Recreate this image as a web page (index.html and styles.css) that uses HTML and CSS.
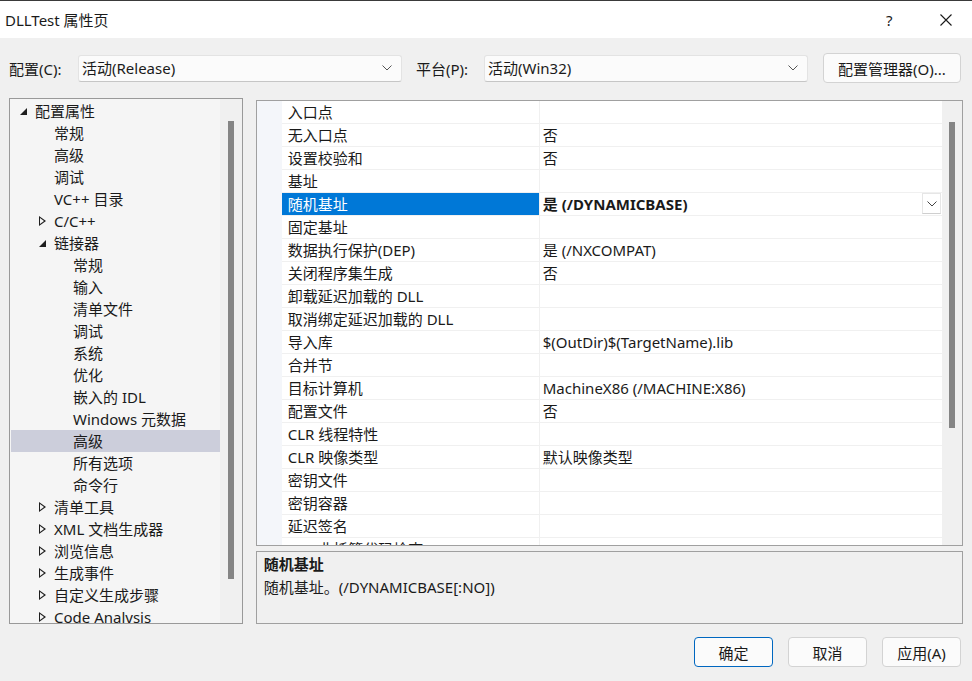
FILE: index.html
```html
<!DOCTYPE html>
<html lang="zh-CN">
<head>
    <meta charset="UTF-8">
    <title>DLLTest 属性页</title>
    <link rel="stylesheet" href="styles.css">
</head>
<body>
    <div class="dialog">
        <header class="titlebar">
            <span class="title">DLLTest 属性页</span>
            <span class="help">?</span>
            <span class="close">
                <svg width="12" height="12" viewBox="0 0 12 12"><path d="M0.5 0.5 L11.5 11.5 M11.5 0.5 L0.5 11.5" stroke="#1a1a1a" stroke-width="1.1" fill="none"/></svg>
            </span>
        </header>

        <div class="config">
            <label class="config-label">配置(C):</label>
            <div class="combo">
                <span>活动(Release)</span>
                <svg class="chevron" width="10" height="6" viewBox="0 0 10 6"><path d="M0.5 0.5 L5 5 L9.5 0.5" stroke="#555" fill="none"/></svg>
            </div>
            <label class="config-label second">平台(P):</label>
            <div class="combo">
                <span>活动(Win32)</span>
                <svg class="chevron" width="10" height="6" viewBox="0 0 10 6"><path d="M0.5 0.5 L5 5 L9.5 0.5" stroke="#555" fill="none"/></svg>
            </div>
            <button class="btn manager">配置管理器(O)...</button>
        </div>

        <div class="main">
            <div class="tree">
                <ul class="tree-list">
                    <li class="lv0"><span class="toggle open"></span>配置属性</li>
                    <li class="lv1"><span class="toggle"></span>常规</li>
                    <li class="lv1"><span class="toggle"></span>高级</li>
                    <li class="lv1"><span class="toggle"></span>调试</li>
                    <li class="lv1"><span class="toggle"></span>VC++ 目录</li>
                    <li class="lv1"><span class="toggle closed"></span>C/C++</li>
                    <li class="lv1"><span class="toggle open"></span>链接器</li>
                    <li class="lv2"><span class="toggle"></span>常规</li>
                    <li class="lv2"><span class="toggle"></span>输入</li>
                    <li class="lv2"><span class="toggle"></span>清单文件</li>
                    <li class="lv2"><span class="toggle"></span>调试</li>
                    <li class="lv2"><span class="toggle"></span>系统</li>
                    <li class="lv2"><span class="toggle"></span>优化</li>
                    <li class="lv2"><span class="toggle"></span>嵌入的 IDL</li>
                    <li class="lv2"><span class="toggle"></span>Windows 元数据</li>
                    <li class="lv2 selected"><span class="toggle"></span>高级</li>
                    <li class="lv2"><span class="toggle"></span>所有选项</li>
                    <li class="lv2"><span class="toggle"></span>命令行</li>
                    <li class="lv1"><span class="toggle closed"></span>清单工具</li>
                    <li class="lv1"><span class="toggle closed"></span>XML 文档生成器</li>
                    <li class="lv1"><span class="toggle closed"></span>浏览信息</li>
                    <li class="lv1"><span class="toggle closed"></span>生成事件</li>
                    <li class="lv1"><span class="toggle closed"></span>自定义生成步骤</li>
                    <li class="lv1"><span class="toggle closed"></span>Code Analysis</li>
                </ul>
                <div class="scrollbar tree-scroll"><div class="thumb"></div></div>
            </div>

            <div class="right">
                <div class="grid">
                    <div class="grid-body">
                        <div class="row"><div class="name">入口点</div><div class="value"></div></div>
                        <div class="row"><div class="name">无入口点</div><div class="value">否</div></div>
                        <div class="row"><div class="name">设置校验和</div><div class="value">否</div></div>
                        <div class="row"><div class="name">基址</div><div class="value"></div></div>
                        <div class="row selected">
                            <div class="name">随机基址</div>
                            <div class="value">是 (/DYNAMICBASE)
                                <span class="drop">
                                    <svg width="10" height="6" viewBox="0 0 10 6"><path d="M0.5 0.5 L5 5 L9.5 0.5" stroke="#444" fill="none"/></svg>
                                </span>
                            </div>
                        </div>
                        <div class="row"><div class="name">固定基址</div><div class="value"></div></div>
                        <div class="row"><div class="name">数据执行保护(DEP)</div><div class="value">是 (/NXCOMPAT)</div></div>
                        <div class="row"><div class="name">关闭程序集生成</div><div class="value">否</div></div>
                        <div class="row"><div class="name">卸载延迟加载的 DLL</div><div class="value"></div></div>
                        <div class="row"><div class="name">取消绑定延迟加载的 DLL</div><div class="value"></div></div>
                        <div class="row"><div class="name">导入库</div><div class="value">$(OutDir)$(TargetName).lib</div></div>
                        <div class="row"><div class="name">合并节</div><div class="value"></div></div>
                        <div class="row"><div class="name">目标计算机</div><div class="value">MachineX86 (/MACHINE:X86)</div></div>
                        <div class="row"><div class="name">配置文件</div><div class="value">否</div></div>
                        <div class="row"><div class="name">CLR 线程特性</div><div class="value"></div></div>
                        <div class="row"><div class="name">CLR 映像类型</div><div class="value">默认映像类型</div></div>
                        <div class="row"><div class="name">密钥文件</div><div class="value"></div></div>
                        <div class="row"><div class="name">密钥容器</div><div class="value"></div></div>
                        <div class="row"><div class="name">延迟签名</div><div class="value"></div></div>
                        <div class="row"><div class="name">CLR 非托管代码检查</div><div class="value"></div></div>
                    </div>
                    <div class="scrollbar grid-scroll"><div class="thumb"></div></div>
                </div>
                <div class="desc">
                    <div class="desc-title">随机基址</div>
                    <div class="desc-text">随机基址。(/DYNAMICBASE[:NO])</div>
                </div>
            </div>
        </div>

        <footer class="buttons">
            <button class="btn default">确定</button>
            <button class="btn">取消</button>
            <button class="btn">应用(A)</button>
        </footer>
    </div>
</body>
</html>
```

FILE: styles.css
```css
html, body {
    margin: 0;
    padding: 0;
    background-color: #f0f0f0;
    font-family: "Noto Sans", "Noto Sans CJK SC", sans-serif;
    font-size: 15px;
    color: #1a1a1a;
}

.dialog {
    width: 972px;
    height: 681px;
    overflow: hidden;
}

/* barra de titulo */
.titlebar {
    height: 37px;
    border-top: 1px solid #3a3a3a;
    background-color: #fff;
    display: flex;
    align-items: center;
    padding-left: 5px;
}

.title {
    flex: 1;
    font-size: 15px;
}

.help {
    width: 20px;
    font-size: 15px;
    margin-right: 34px;
}

.close {
    width: 32px;
    display: flex;
    align-items: center;
}

/* linha de configuracao */
.config {
    height: 60px;
    display: flex;
    align-items: center;
    padding-left: 9px;
}

.config-label {
    width: 69px;
}

.config-label.second {
    width: 68px;
    margin-left: 14px;
}

.combo {
    width: 324px;
    height: 27px;
    box-sizing: border-box;
    background-color: #fbfbfb;
    border: 1px solid #e3e3e3;
    border-bottom-color: #c6c6c6;
    border-radius: 3px;
    display: flex;
    align-items: center;
    justify-content: space-between;
    padding: 0 9px 1px 3px;
}

.btn {
    font-family: inherit;
    font-size: 15px;
    color: #1a1a1a;
    background-color: #fbfbfb;
    border: 1px solid #d3d3d3;
    border-radius: 4px;
    height: 30px;
    width: 79px;
    padding: 0;
}

.btn.manager {
    width: 138px;
    margin-left: 15px;
}

.btn.default {
    border-color: #0067c0;
}

/* area principal */
.main {
    display: flex;
    padding: 0 9px;
    gap: 13px;
}

.tree {
    width: 234px;
    height: 526px;
    box-sizing: border-box;
    border: 1px solid #999;
    background-color: #f5f5f5;
    display: flex;
    overflow: hidden;
}

.tree-list {
    list-style: none;
    margin: 0;
    padding: 1px 0 0 1px;
    width: 209px;
}

.tree-list li {
    height: 22px;
    line-height: 22px;
    display: flex;
    align-items: center;
    white-space: nowrap;
}

.tree-list li.selected {
    background-color: #cccedb;
}

.lv0 { padding-left: 9px; }
.lv1 { padding-left: 28px; }
.lv2 { padding-left: 47px; }

.toggle {
    width: 15px;
    height: 22px;
    flex-shrink: 0;
    position: relative;
}

.toggle.open::before {
    content: "";
    position: absolute;
    left: 0;
    top: 8px;
    border-left: 7px solid transparent;
    border-bottom: 7px solid #1e1e1e;
}

.toggle.closed::before {
    content: "";
    position: absolute;
    left: 0;
    top: 6px;
    border-top: 5px solid transparent;
    border-bottom: 5px solid transparent;
    border-left: 7px solid #1e1e1e;
}

.toggle.closed::after {
    content: "";
    position: absolute;
    left: 1px;
    top: 8px;
    border-top: 3px solid transparent;
    border-bottom: 3px solid transparent;
    border-left: 4px solid #f5f5f5;
}

.scrollbar {
    background-color: #f0f0f0;
    flex-shrink: 0;
    display: flex;
    justify-content: center;
}

.thumb {
    width: 6px;
    background-color: #858585;
}

.tree-scroll {
    width: 22px;
}

.tree-scroll .thumb {
    margin-top: 22px;
    height: 458px;
}

.right {
    width: 708px;
    margin-top: 2px;
    display: flex;
    flex-direction: column;
    gap: 5px;
}

.grid {
    height: 446px;
    box-sizing: border-box;
    border: 1px solid #a0a0a0;
    display: flex;
    overflow: hidden;
}

.grid-body {
    flex: 1;
    background-color: #fff;
    border-left: 25px solid #f4f6fa;
    overflow: hidden;
}

.row {
    height: 23px;
    box-sizing: border-box;
    border-bottom: 1px solid #f0f0f0;
    display: flex;
    line-height: 22px;
    white-space: nowrap;
}

.name {
    width: 258px;
    padding-left: 6px;
    box-sizing: border-box;
    border-right: 1px solid #f0f0f0;
}

.value {
    flex: 1;
    padding-left: 3px;
    position: relative;
}

.row.selected .name {
    background-color: #0078d7;
    color: #fff;
}

.row.selected .value {
    font-weight: bold;
}

.drop {
    position: absolute;
    right: 1px;
    top: 0;
    width: 19px;
    height: 21px;
    box-sizing: border-box;
    background-color: #fff;
    border: 1px solid #e6e6e6;
    border-bottom-color: #cfcfcf;
    display: flex;
    align-items: center;
    justify-content: center;
}

.grid-scroll {
    width: 20px;
}

.grid-scroll .thumb {
    margin-top: 21px;
    height: 306px;
}

.desc {
    height: 73px;
    box-sizing: border-box;
    border: 1px solid #a0a0a0;
    padding: 1px 7px;
    line-height: 23px;
}

.desc-title {
    font-weight: bold;
}

/* botoes */
.buttons {
    display: flex;
    justify-content: flex-end;
    gap: 15px;
    padding: 13px 11px 0 0;
}
```
